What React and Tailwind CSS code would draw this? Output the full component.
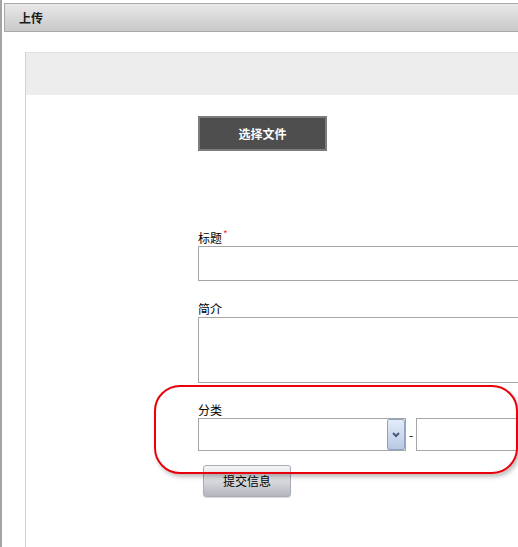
import React from 'react';

const font = { fontFamily: '"Noto Sans CJK SC", "Liberation Sans", sans-serif' };

function Field({ label, required, children, className = '' }) {
    return (
        <div className={className}>
            <div className="h-[16px] text-[12px] leading-[16px] text-black">
                {label}
                {required && <sup className="text-[10px] text-red-500 ml-[1px]">*</sup>}
            </div>
            {children}
        </div>
    );
}

export default function App() {
    return (
        <div
            className="relative w-[518px] h-[547px] overflow-hidden bg-white border-l-2 border-[#a4a4a4]"
            style={font}
        >
            {/* page title bar */}
            <div className="mt-[3px] ml-[2px] h-[29px] flex items-center pl-[14px] border border-r-0 border-[#a9a9a9] bg-gradient-to-b from-[#e8e8e8] to-[#c9c9c9]">
                <span className="text-[12px] font-bold text-[#1a1a1a]">上传</span>
            </div>

            {/* upload panel */}
            <div className="ml-[23px] mt-[20px] h-[520px] border-l border-[#d2d2d2]">
                <div className="h-[43px] bg-[#ededee] border-t border-[#e2e2e2]" />

                <div className="pl-[172px] pt-[21px]">
                    <button className="w-[129px] h-[35px] bg-[#4e4e4e] border-2 border-[#7c7c7c] text-white text-[12px] font-bold">
                        选择文件
                    </button>

                    <Field label="标题" required className="mt-[79px]">
                        <div className="h-[35px] w-[340px] border border-[#a6a6a6] bg-white" />
                    </Field>

                    <Field label="简介" className="mt-[20px]">
                        <div className="h-[66px] w-[340px] border border-[#a6a6a6] bg-white" />
                    </Field>

                    <Field label="分类" className="mt-[19px]">
                        <div className="flex items-center h-[33px] w-[360px]">
                            <div className="flex shrink-0 h-[33px] w-[208px] border border-[#a6a6a6] bg-white">
                                <div className="flex-1" />
                                <div className="w-[18px] h-full flex items-center justify-center border border-[#8fa3c4] rounded-[2px] bg-gradient-to-b from-[#e4ecf8] to-[#b9c9e4]">
                                    <svg width="8" height="6" viewBox="0 0 8 6">
                                        <path d="M1 1 L4 4 L7 1" stroke="#4a5a78" strokeWidth="2" fill="none" />
                                    </svg>
                                </div>
                            </div>
                            <span className="shrink-0 w-[10px] text-center text-[12px] text-black">-</span>
                            <div className="shrink-0 h-[33px] w-[120px] border border-[#a6a6a6] bg-white" />
                        </div>
                    </Field>

                    <button className="mt-[14px] ml-[5px] w-[88px] h-[32px] rounded-[3px] border border-[#a8acb4] bg-gradient-to-b from-[#f4f5f7] via-[#d7d9de] to-[#b3b6bd] text-[12px] text-black shadow-[0_1px_1px_rgba(0,0,0,0.15)]">
                        提交信息
                    </button>
                </div>
            </div>

            {/* red highlight around the category row */}
            <div className="absolute left-[152px] top-[385px] w-[364px] h-[89px] rounded-[26px] border-2 border-[#e8000b] shadow-[2px_3px_4px_rgba(0,0,0,0.25)] pointer-events-none" />
        </div>
    );
}
